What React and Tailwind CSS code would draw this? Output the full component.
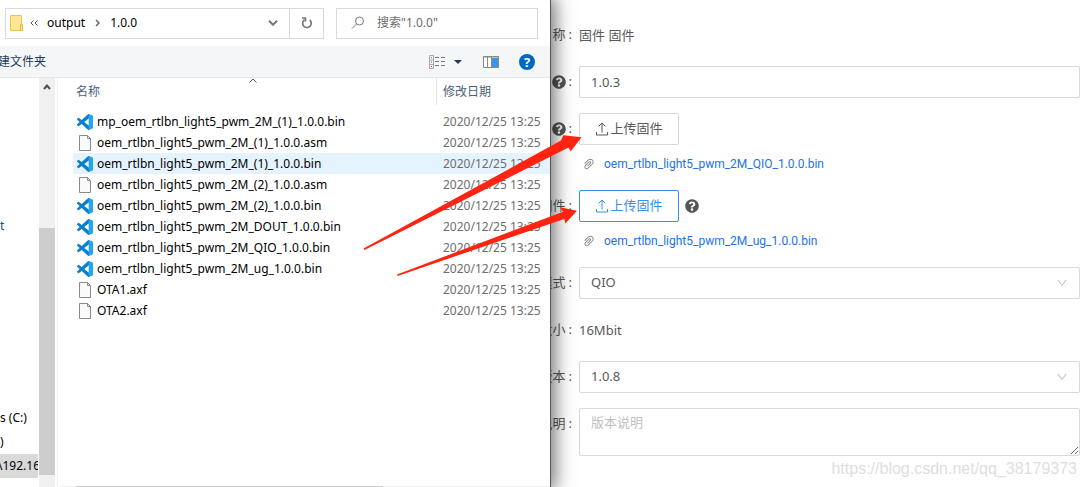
import { AiOutlineDown, AiOutlinePaperClip } from "react-icons/ai";
import { FaQuestionCircle } from "react-icons/fa";

const files = [
  { name: "mp_oem_rtlbn_light5_pwm_2M_(1)_1.0.0.bin", code: true },
  { name: "oem_rtlbn_light5_pwm_2M_(1)_1.0.0.asm" },
  { name: "oem_rtlbn_light5_pwm_2M_(1)_1.0.0.bin", code: true, active: true },
  { name: "oem_rtlbn_light5_pwm_2M_(2)_1.0.0.asm" },
  { name: "oem_rtlbn_light5_pwm_2M_(2)_1.0.0.bin", code: true },
  { name: "oem_rtlbn_light5_pwm_2M_DOUT_1.0.0.bin", code: true },
  { name: "oem_rtlbn_light5_pwm_2M_QIO_1.0.0.bin", code: true },
  { name: "oem_rtlbn_light5_pwm_2M_ug_1.0.0.bin", code: true },
  { name: "OTA1.axf" },
  { name: "OTA2.axf" },
];

function CodeIcon() {
  return (
    <svg viewBox="0 0 24 24" className="size-4 shrink-0" aria-hidden="true">
      <path
        fill="#0b7fcc"
        d="M23.15 2.587L18.21.21a1.494 1.494 0 0 0-1.705.29l-9.46 8.63-4.12-3.128a.999.999 0 0 0-1.276.057L.327 7.261A1 1 0 0 0 .326 8.74L3.899 12 .326 15.26a1 1 0 0 0 .001 1.479L1.65 17.94a.999.999 0 0 0 1.276.057l4.12-3.128 9.46 8.63a1.492 1.492 0 0 0 1.704.29l4.942-2.377A1.5 1.5 0 0 0 24 20.06V3.939a1.5 1.5 0 0 0-.85-1.352zm-5.146 14.861L10.826 12l7.178-5.448v10.896z"
      />
      <path fill="#23a6ee" d="M17.500 0l5.650 2.587A1.5 1.5 0 0 1 24 3.94V20.06a1.5 1.5 0 0 1-.85 1.352L17.500 24z" />
    </svg>
  );
}

function PageIcon() {
  return (
    <svg viewBox="0 0 16 16" className="size-4 shrink-0" aria-hidden="true">
      <path d="M2.500.5h8l3 3v12h-11z" fill="#fafafa" stroke="#8a8a8a" />
      <path d="M10.500.5v3h3" fill="none" stroke="#8a8a8a" />
    </svg>
  );
}

function UploadIcon() {
  return (
    <svg viewBox="0 0 14 14" className="size-3.5 shrink-0" fill="none" stroke="currentColor" aria-hidden="true">
      <path d="M1.500 10v3h11v-3M7 10.500V1M3.700 4.300L7 1l3.300 3.300" />
    </svg>
  );
}

function Explorer() {
  return (
    <section className="relative z-10 flex w-[551px] shrink-0 flex-col border-r border-[#555] bg-white text-[12px] text-black shadow-[2px_0_16px_3px_rgba(0,0,0,0.5)]">
      <div className="flex h-[46px] shrink-0 items-center pl-[5px] pr-3">
        <div className="flex h-[31px] w-[319px] border border-[#d9d9d9]">
          <div className="flex flex-1 items-center pl-1">
            <svg viewBox="0 0 14 16" className="h-4 w-3.5" aria-hidden="true">
              <path d="M.5.5h11v15H.5z" fill="#ffe596" stroke="#ecc64f" />
              <path d="M10.500 9.500h2v6h-2z" fill="#ffe596" stroke="#e5b93c" />
            </svg>
            <svg viewBox="0 0 8 6" className="ml-1.5 h-1.5 w-2" fill="none" stroke="#555" aria-hidden="true">
              <path d="M3.500.5L1 3l2.500 2.500M7.500.5L5 3l2.500 2.500" />
            </svg>
            <span className="ml-[9px]">output</span>
            <svg viewBox="0 0 5 8" className="ml-2.5 h-2 w-[5px]" fill="none" stroke="#666" strokeWidth="1.500" aria-hidden="true">
              <path d="M1 1l3 3-3 3" />
            </svg>
            <span className="ml-2.5">1.0.0</span>
            <button type="button" aria-label="历史记录" className="ml-auto mr-[11px]">
              <svg viewBox="0 0 10 6" className="h-1.5 w-2.5" fill="none" stroke="#777" strokeWidth="2">
                <path d="M1 .8l4 4 4-4" />
              </svg>
            </button>
          </div>
          <button type="button" aria-label="刷新" className="flex w-[34px] items-center justify-center border-l border-[#d9d9d9]">
            <svg viewBox="0 0 12 12" className="size-3" fill="none" stroke="#777" strokeWidth="1.700">
              <path d="M3.500 2.700A4.300 4.300 0 1 0 8.800 3" />
              <path d="M4.500 4.500V1H1" />
            </svg>
          </button>
        </div>
        <label className="ml-3 flex h-[31px] flex-1 items-center border border-[#d9d9d9] pl-3.5">
          <svg viewBox="0 0 14 14" className="size-3.5 shrink-0" fill="none" stroke="#777" aria-hidden="true">
            <circle cx="8.500" cy="5" r="4" />
            <path d="M5.700 7.800L1 12.500" />
          </svg>
          <input
            type="text"
            aria-label="搜索"
            placeholder={'搜索"1.0.0"'}
            className="ml-3 w-0 flex-1 bg-transparent outline-none placeholder:text-[#6b6b6b]"
          />
        </label>
      </div>

      <div className="flex h-8 shrink-0 items-center border-b border-[#e6e7e8] bg-[#f5f6f7] pr-[15px]">
        <button type="button" className="-ml-0.5 text-[#1e395b]">建文件夹</button>
        <button type="button" aria-label="更改视图" className="ml-auto flex items-center gap-2">
          <svg viewBox="0 0 17 14" className="h-3.5 w-[17px]" fill="none">
            <path d="M.5.5h4v13h-4zM.5 5h4M.5 9.500h4" stroke="#aaa" />
            <path d="M6 2.500h4M12 2.500h4M6 6.500h4M12 6.500h4M6 10.500h4M12 10.500h4" stroke="#777" />
            <path d="M2 2h1v1H2z" fill="#2a8" />
            <path d="M2 6.500h1v1H2z" fill="#26c" />
            <path d="M2 11h1v1H2z" fill="#d22" />
          </svg>
          <svg viewBox="0 0 8 4" className="h-1 w-2">
            <path d="M0 0h8L4 4z" fill="#1e395b" />
          </svg>
        </button>
        <button type="button" aria-label="预览窗格" className="ml-[21px]">
          <svg viewBox="0 0 16 12" className="h-3 w-4" fill="none">
            <path d="M.5.5h15v11H.5z" fill="#fff" stroke="#888" />
            <path d="M0 1h16M4.500 1v10M8.500 1v10" stroke="#888" />
            <path d="M9 2h6v9H9z" fill="#3a96e4" />
          </svg>
        </button>
        <button type="button" aria-label="帮助" className="ml-5 flex size-4 items-center justify-center rounded-full bg-[#0067c0] text-[13px] leading-4 font-bold text-white">
          ?
        </button>
      </div>

      <div className="flex min-h-0 flex-1">
        <nav className="w-[38px] shrink-0 overflow-hidden whitespace-nowrap">
          <ul className="pt-[136px] leading-6">
            <li className="h-6 text-[#00579c]">t</li>
            <li className="mt-[168px] h-6">s (C:)</li>
            <li className="h-6">)</li>
            <li className="h-6 bg-[#d9d9d9] -indent-0.5">\192.16</li>
          </ul>
        </nav>
        <div className="ml-px flex w-4 shrink-0 flex-col items-center bg-[#f0f0f0]">
          <svg viewBox="0 0 8 6" className="mt-1.5 h-1.5 w-2 shrink-0" fill="none" stroke="#505050" strokeWidth="2" aria-hidden="true">
            <path d="M1 5l3-3.500L7 5" />
          </svg>
          <div className="mt-[138px] h-[247px] w-full bg-[#cdcdcd]" />
        </div>
        <div className="ml-0.5 flex min-w-0 flex-1 flex-col border-l border-[#f0f0f0]">
          <table className="ml-[15px] table-fixed border-collapse">
            <colgroup>
              <col className="w-[364px]" />
              <col />
            </colgroup>
            <thead>
              <tr className="text-left text-[#4c607a]">
                <th className="p-0 pb-1.5 font-normal">
                  <div className="relative h-[27px] border-r border-[#e5e5e5] pl-[3px] leading-[27px]">
                    名称
                    <svg viewBox="0 0 8 5" className="absolute top-0 left-[176px] h-[5px] w-2" fill="none" stroke="#555" aria-hidden="true">
                      <path d="M.5 4.500L4 1l3.500 3.500" />
                    </svg>
                  </div>
                </th>
                <th className="p-0 pb-1.5 pl-1.5 font-normal">修改日期</th>
              </tr>
            </thead>
            <tbody>
              {files.map((f) => (
                <tr key={f.name} className={f.active ? "h-[21px] bg-[#e5f3ff]" : "h-[21px]"}>
                  <td className="p-0 pl-1">
                    <span className="flex h-[21px] items-center gap-1 whitespace-nowrap">
                      {f.code ? <CodeIcon /> : <PageIcon />}
                      {f.name}
                    </span>
                  </td>
                  <td className="p-0 pl-1.5 whitespace-nowrap text-[#6d6d6d]">2020/12/25 13:25</td>
                </tr>
              ))}
            </tbody>
          </table>
          <div className="mt-auto ml-px h-px bg-[#f0f0f0] pl-[17px]">
            <div className="h-px w-[307px] bg-[#cdcdcd]" />
          </div>
        </div>
      </div>
    </section>
  );
}

function Row({ label, htmlFor, help, children }) {
  return (
    <div className="flex">
      <label htmlFor={htmlFor} className="flex h-8 w-7 shrink-0 items-center justify-end gap-[3px] overflow-hidden pr-[7px] whitespace-nowrap">
        {help ? <FaQuestionCircle className="size-3.5 shrink-0 text-[#555]" /> : label}
        <span>:</span>
      </label>
      <div className="min-w-0 flex-1">{children}</div>
    </div>
  );
}

function Upload({ id, file, primary, help }) {
  return (
    <>
      <div className="flex items-center gap-1.5">
        <button
          id={id}
          type="button"
          className={
            primary
              ? "flex h-8 w-[100px] items-center justify-center gap-px rounded-[2px] border border-[#3a8ee6] text-[#3a8ee6]"
              : "flex h-8 w-[100px] items-center justify-center gap-px rounded-[2px] border border-[#d9d9d9]"
          }
        >
          <UploadIcon />
          上传固件
        </button>
        {help && <FaQuestionCircle className="size-3.5 text-[#555]" />}
      </div>
      <div className="mt-2 flex h-[22px] items-center gap-2 pl-[3px] font-[Roboto,sans-serif] text-[12px]">
        <AiOutlinePaperClip className="size-3.5 text-[#888]" />
        <a href="#file" className="text-[#1a73e8]">{file}</a>
      </div>
    </>
  );
}

function Select({ id, value }) {
  return (
    <div className="relative">
      <select id={id} defaultValue={value} className="h-8 w-full appearance-none rounded-[2px] border border-[#d9d9d9] bg-white px-[11px] outline-none">
        <option>{value}</option>
      </select>
      <AiOutlineDown className="pointer-events-none absolute top-2.5 right-3 size-3 text-[#bfbfbf]" />
    </div>
  );
}

export default function App() {
  return (
    <main className="relative flex h-screen overflow-hidden bg-white font-['Noto_Sans','Noto_Sans_CJK_SC',sans-serif]">
      <Explorer />
      <form className="flex min-w-0 flex-1 flex-col gap-[15px] pt-[19px] pr-[5px] text-[13px] text-[#595959]">
        <Row label="名称">
          <p className="leading-8">固件 固件</p>
        </Row>
        <Row help htmlFor="version">
          <input id="version" type="text" defaultValue="1.0.3" className="h-8 w-full rounded-[2px] border border-[#d9d9d9] px-[11px] outline-none" />
        </Row>
        <Row help htmlFor="firmware">
          <Upload id="firmware" file="oem_rtlbn_light5_pwm_2M_QIO_1.0.0.bin" />
        </Row>
        <Row label="固件" htmlFor="upgrade">
          <Upload id="upgrade" file="oem_rtlbn_light5_pwm_2M_ug_1.0.0.bin" primary help />
        </Row>
        <Row label="模式" htmlFor="mode">
          <Select id="mode" value="QIO" />
        </Row>
        <Row label="大小">
          <p className="leading-8">16Mbit</p>
        </Row>
        <Row label="版本" htmlFor="base">
          <Select id="base" value="1.0.8" />
        </Row>
        <Row label="说明" htmlFor="notes">
          <textarea id="notes" placeholder="版本说明" className="block h-12 w-full rounded-[2px] border border-[#d9d9d9] px-[11px] py-1 outline-none placeholder:text-[#bfbfbf]" />
        </Row>
      </form>
      <p className="pointer-events-none absolute right-2 bottom-1.5 z-20 font-['Liberation_Sans',sans-serif] text-[16px] leading-6 text-[#dedede]">
        https://blog.csdn.net/qq_38179373
      </p>
      <svg viewBox="0 0 600 300" className="pointer-events-none absolute top-0 left-0 z-20 h-[300px] w-[600px]" fill="#ff2412" aria-hidden="true">
        <path d="M363.500 248.500L561 140.500L563.300 135.300L581.500 137.300L570.700 151.500L568.500 147.500L364.500 250z" />
        <path d="M397 274.500L563 211.700L560 207.300L577 210.700L565.300 223.500L564.300 219L397.500 276z" />
      </svg>
    </main>
  );
}
